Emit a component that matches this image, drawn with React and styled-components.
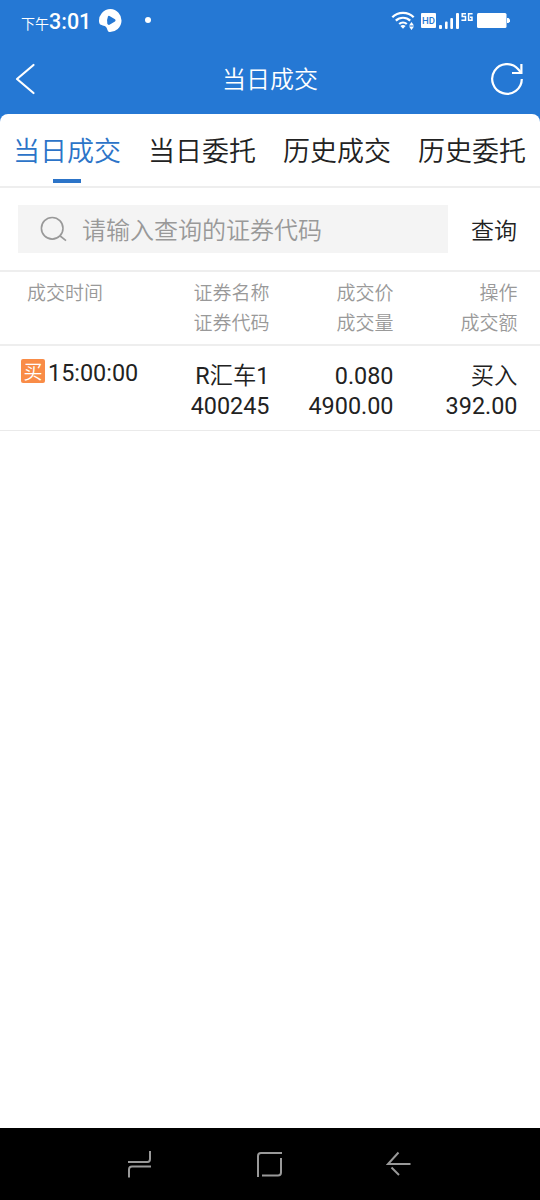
import React, { useState } from "react";
import styled, { createGlobalStyle } from "styled-components";

const GlobalStyle = createGlobalStyle`
  * {
    box-sizing: border-box;
  }

  body {
    margin: 0;
    background: #fff;
    font-family: Roboto, "Noto Sans CJK SC", sans-serif;
    color: #222;
  }

  button,
  input {
    font-family: inherit;
    color: inherit;
    border: none;
    background: none;
    padding: 0;
    margin: 0;
  }
`;

const Screen = styled.div`
  width: 540px;
  height: 1200px;
  display: flex;
  flex-direction: column;
  background: #2578d4;
  overflow: hidden;
`;

const StatusBar = styled.div`
  height: 42px;
  display: flex;
  align-items: center;
  justify-content: space-between;
  padding: 0 30px 0 21px;
  color: #fff;
`;

const StatusLeft = styled.div`
  display: flex;
  align-items: center;
`;

const Clock = styled.div`
  width: 70px;
  display: flex;
  align-items: baseline;
  padding-top: 4px;
  line-height: 24px;
  white-space: nowrap;
`;

const Period = styled.span`
  font-size: 14px;
  font-weight: 350;
`;

const Time = styled.span`
  font-size: 21.5px;
  font-weight: 500;
`;

const AppBadge = styled.svg`
  margin-left: 7px;
`;

const Dot = styled.span`
  width: 6px;
  height: 6px;
  margin-left: 23px;
  margin-top: -2px;
  border-radius: 50%;
  background: #fff;
`;

const Header = styled.div`
  height: 72px;
  display: grid;
  grid-template-columns: 60px 1fr 60px;
  align-items: center;
  color: #fff;
`;

const IconButton = styled.button`
  height: 72px;
  display: flex;
  align-items: center;
  justify-content: ${({ $align }) => $align};
  padding: 1px 16px 0 14px;

  svg {
    flex-shrink: 0;
  }
`;

const Title = styled.div`
  padding-top: 3px;
  font-size: 24px;
  font-weight: 350;
  line-height: 36px;
  text-align: center;
`;

const Panel = styled.div`
  flex: 1;
  background: #fff;
  border-radius: 8px 8px 0 0;
`;

const Tabs = styled.div`
  height: 74px;
  display: grid;
  grid-template-columns: repeat(4, 1fr);
  border-bottom: 2px solid #eee;
`;

const Tab = styled.button`
  display: flex;
  flex-direction: column;
  align-items: center;
  padding-top: 18px;
  padding-right: 1px;
  font-size: 27px;
  font-weight: 350;
  line-height: 40px;
  color: ${({ $active }) => ($active ? "#2c74c8" : "#222")};

  &::after {
    content: "";
    width: 28px;
    height: 4px;
    margin-top: 7px;
    background: ${({ $active }) => ($active ? "#2c74c8" : "transparent")};
  }
`;

const SearchBar = styled.div`
  height: 84px;
  display: flex;
  align-items: center;
  padding: 0 0 0 18px;
  border-bottom: 2px solid #eee;
`;

const SearchField = styled.label`
  width: 430px;
  height: 48px;
  display: flex;
  align-items: center;
  gap: 14px;
  padding-left: 22px;
  background: #f4f4f4;
`;

const SearchInput = styled.input`
  flex: 1;
  height: 48px;
  padding-top: 3px;
  font-size: 24px;
  font-weight: 350;
  outline: none;

  &::placeholder {
    color: #999;
    opacity: 1;
  }
`;

const QueryButton = styled.button`
  flex: 1;
  padding-top: 5px;
  font-size: 23px;
  font-weight: 350;
  line-height: 36px;
`;

const TableRow = styled.div`
  display: grid;
  grid-template-columns: 130.5px 118px 124px 124px;
  padding-left: 21px;
  line-height: 30px;
`;

const TableHead = styled(TableRow)`
  height: 74px;
  padding-top: 7px;
  font-size: 19px;
  font-weight: 350;
  color: #999;
  border-bottom: 2px solid #eee;
`;

const TradeRow = styled(TableRow)`
  height: 85px;
  padding-top: 15px;
  font-size: 23.4px;
  border-bottom: 1px solid #eaeaea;
`;

const Cell = styled.div`
  text-align: right;
  white-space: nowrap;
`;

const Han = styled.span`
  font-weight: 350;
`;

const TimeLabel = styled.div`
  padding-left: 6px;
`;

const TimeCell = styled.div`
  height: 24px;
  display: flex;
  align-items: center;
  gap: 3px;
  margin-top: -2px;
  white-space: nowrap;
`;

const TradeTime = styled.span`
  padding-top: 4px;
`;

const SideTag = styled.span`
  width: 24px;
  height: 24px;
  flex-shrink: 0;
  border-radius: 2px;
  background: #f98c47;
  color: #fff;
  font-size: 19px;
  font-weight: 350;
  line-height: 27px;
  text-align: center;
`;

const NavBar = styled.div`
  height: 72px;
  display: flex;
  justify-content: space-between;
  align-items: center;
  padding: 0 126px;
  background: #000;
`;

const tabs = ["当日成交", "当日委托", "历史成交", "历史委托"];

const columns = [
  ["证券名称", "证券代码"],
  ["成交价", "成交量"],
  ["操作", "成交额"],
];

const trades = [
  {
    id: 1,
    side: "买",
    time: "15:00:00",
    cells: [
      ["R汇车1", "400245"],
      ["0.080", "4900.00"],
      ["买入", "392.00"],
    ],
  },
];

// Han characters look too heavy next to Roboto digits, so they get a lighter weight
const renderValue = (value) =>
  value
    .split(/([\u4e00-\u9fff]+)/)
    .map((part, i) => (i % 2 ? <Han key={i}>{part}</Han> : part));

const StatusIcons = () => (
  <svg width="120" height="22" viewBox="390 10 120 22" fill="none">
    <g stroke="#fff" strokeWidth="2.2">
      <path d="M392.3 17.2C398 11.4 408 11.4 413.7 17.2" />
      <path d="M395.8 20.6C399.8 16.8 406.2 16.8 410.2 20.6" />
      <path d="M399.2 24C401.4 22 404.6 22 406.8 24" />
    </g>
    <path d="M400.4 26C401.8 24.7 404.2 24.7 405.6 26L403 28.8Z" fill="#fff" />
    <path d="M411.5 22L414 25.4H409ZM411.5 30L414 26.6H409Z" fill="#fff" />
    <rect x="421" y="13" width="15" height="15" rx="1" fill="#fff" />
    <text x="428.5" y="24" fontSize="9.5" fontWeight="500" textAnchor="middle" fill="#2578d4" fontFamily="Roboto">
      HD
    </text>
    <g fill="#fff">
      <rect x="439" y="25" width="3" height="4" rx="1" />
      <rect x="445" y="21.5" width="2.6" height="7.5" rx="1" />
      <rect x="450.3" y="18" width="2.7" height="11" rx="1" />
      <rect x="456" y="13" width="3" height="16" rx="1" />
      <rect x="477" y="13" width="29.5" height="15" rx="1.5" />
      <path d="M507 18H508.5L510 19.5V21.5L508.5 23H507Z" />
    </g>
    <g stroke="#fff" strokeWidth="1.5">
      <path d="M466 13.8H462.2V16.6H465.5V20.2H461.4" />
      <path d="M472.6 13.8H468.6V20.2H472V17.2H470" />
    </g>
  </svg>
);

const BackIcon = () => (
  <svg width="22" height="34" viewBox="0 0 22 34" fill="none" stroke="#fff" strokeWidth="2.2">
    <path d="M19.5 3L3 17L19.5 31" strokeLinecap="round" strokeLinejoin="round" />
  </svg>
);

const RefreshIcon = () => (
  <svg width="34" height="34" viewBox="490 62 34 34" fill="none" stroke="#fff" strokeWidth="2.2">
    <path d="M521.8 79A14.8 14.8 0 1 1 518.2 69.3L521 72.5" />
    <path d="M521.4 64V73H512" />
  </svg>
);

const SearchIcon = () => (
  <svg width="28" height="28" viewBox="40 215 28 28" fill="none" stroke="#999" strokeWidth="1.6">
    <circle cx="52.2" cy="228.3" r="10.8" />
    <path d="M60.2 236L66 240.6" />
  </svg>
);

function App() {
  const [activeTab, setActiveTab] = useState("当日成交");
  const [code, setCode] = useState("");

  return (
    <>
      <GlobalStyle />
      <Screen>
        <StatusBar>
          <StatusLeft>
            <Clock>
              <Period>下午</Period>
              <Time>3:01</Time>
            </Clock>
            <AppBadge width="24" height="24" viewBox="98 9 24 24">
              <path
                d="M110.5 9A11.5 11.5 0 1 1 109.5 32C107 31.3 107.8 28.5 105.5 26.5C103.5 24.8 99.5 26 99.1 22A11.6 11.6 0 0 1 110.5 9Z"
                fill="#fff"
              />
              <path
                d="M108 16.2Q108.6 15.6 109.5 16L115 19.3Q116.3 20.4 115 21.5L109.5 24.8Q108 25.3 107.3 23.8Q106.6 19.5 108 16.2Z"
                fill="#2578d4"
              />
            </AppBadge>
            <Dot />
          </StatusLeft>
          <StatusIcons />
        </StatusBar>
        <Header>
          <IconButton $align="flex-start">
            <BackIcon />
          </IconButton>
          <Title>当日成交</Title>
          <IconButton $align="flex-end">
            <RefreshIcon />
          </IconButton>
        </Header>
        <Panel>
          <Tabs>
            {tabs.map((tab) => (
              <Tab key={tab} $active={tab === activeTab} onClick={() => setActiveTab(tab)}>
                {tab}
              </Tab>
            ))}
          </Tabs>
          <SearchBar>
            <SearchField>
              <SearchIcon />
              <SearchInput
                value={code}
                placeholder="请输入查询的证券代码"
                onChange={(e) => setCode(e.target.value)}
              />
            </SearchField>
            <QueryButton>查询</QueryButton>
          </SearchBar>
          <TableHead>
            <TimeLabel>成交时间</TimeLabel>
            {columns.map(([top, bottom]) => (
              <Cell key={top}>
                <div>{top}</div>
                <div>{bottom}</div>
              </Cell>
            ))}
          </TableHead>
          {trades.map((trade) => (
            <TradeRow key={trade.id}>
              <TimeCell>
                <SideTag>{trade.side}</SideTag>
                <TradeTime>{trade.time}</TradeTime>
              </TimeCell>
              {trade.cells.map(([top, bottom]) => (
                <Cell key={bottom}>
                  <div>{renderValue(top)}</div>
                  <div>{renderValue(bottom)}</div>
                </Cell>
              ))}
            </TradeRow>
          ))}
        </Panel>
        <NavBar>
          <svg width="28" height="30" viewBox="126 1149 28 30" fill="none" stroke="#999" strokeWidth="2">
            <path d="M128 1162H147.5Q150 1162 150 1159V1151" />
            <path d="M151 1166.5H132Q129 1166.5 129 1169.5V1177.5" />
          </svg>
          <svg width="28" height="30" viewBox="256 1149 28 30" fill="none" stroke="#999" strokeWidth="2">
            <path d="M258 1177V1156Q258 1153 261 1153H282" />
            <path d="M281 1158V1172.5Q281 1175.5 278 1175.5H262" />
          </svg>
          <svg width="28" height="30" viewBox="386 1149 28 30" fill="none" stroke="#999" strokeWidth="2">
            <path d="M398.5 1152.5L388 1164H410.5" />
            <path d="M391.5 1167.5L399 1175" />
          </svg>
        </NavBar>
      </Screen>
    </>
  );
}

export default App;
